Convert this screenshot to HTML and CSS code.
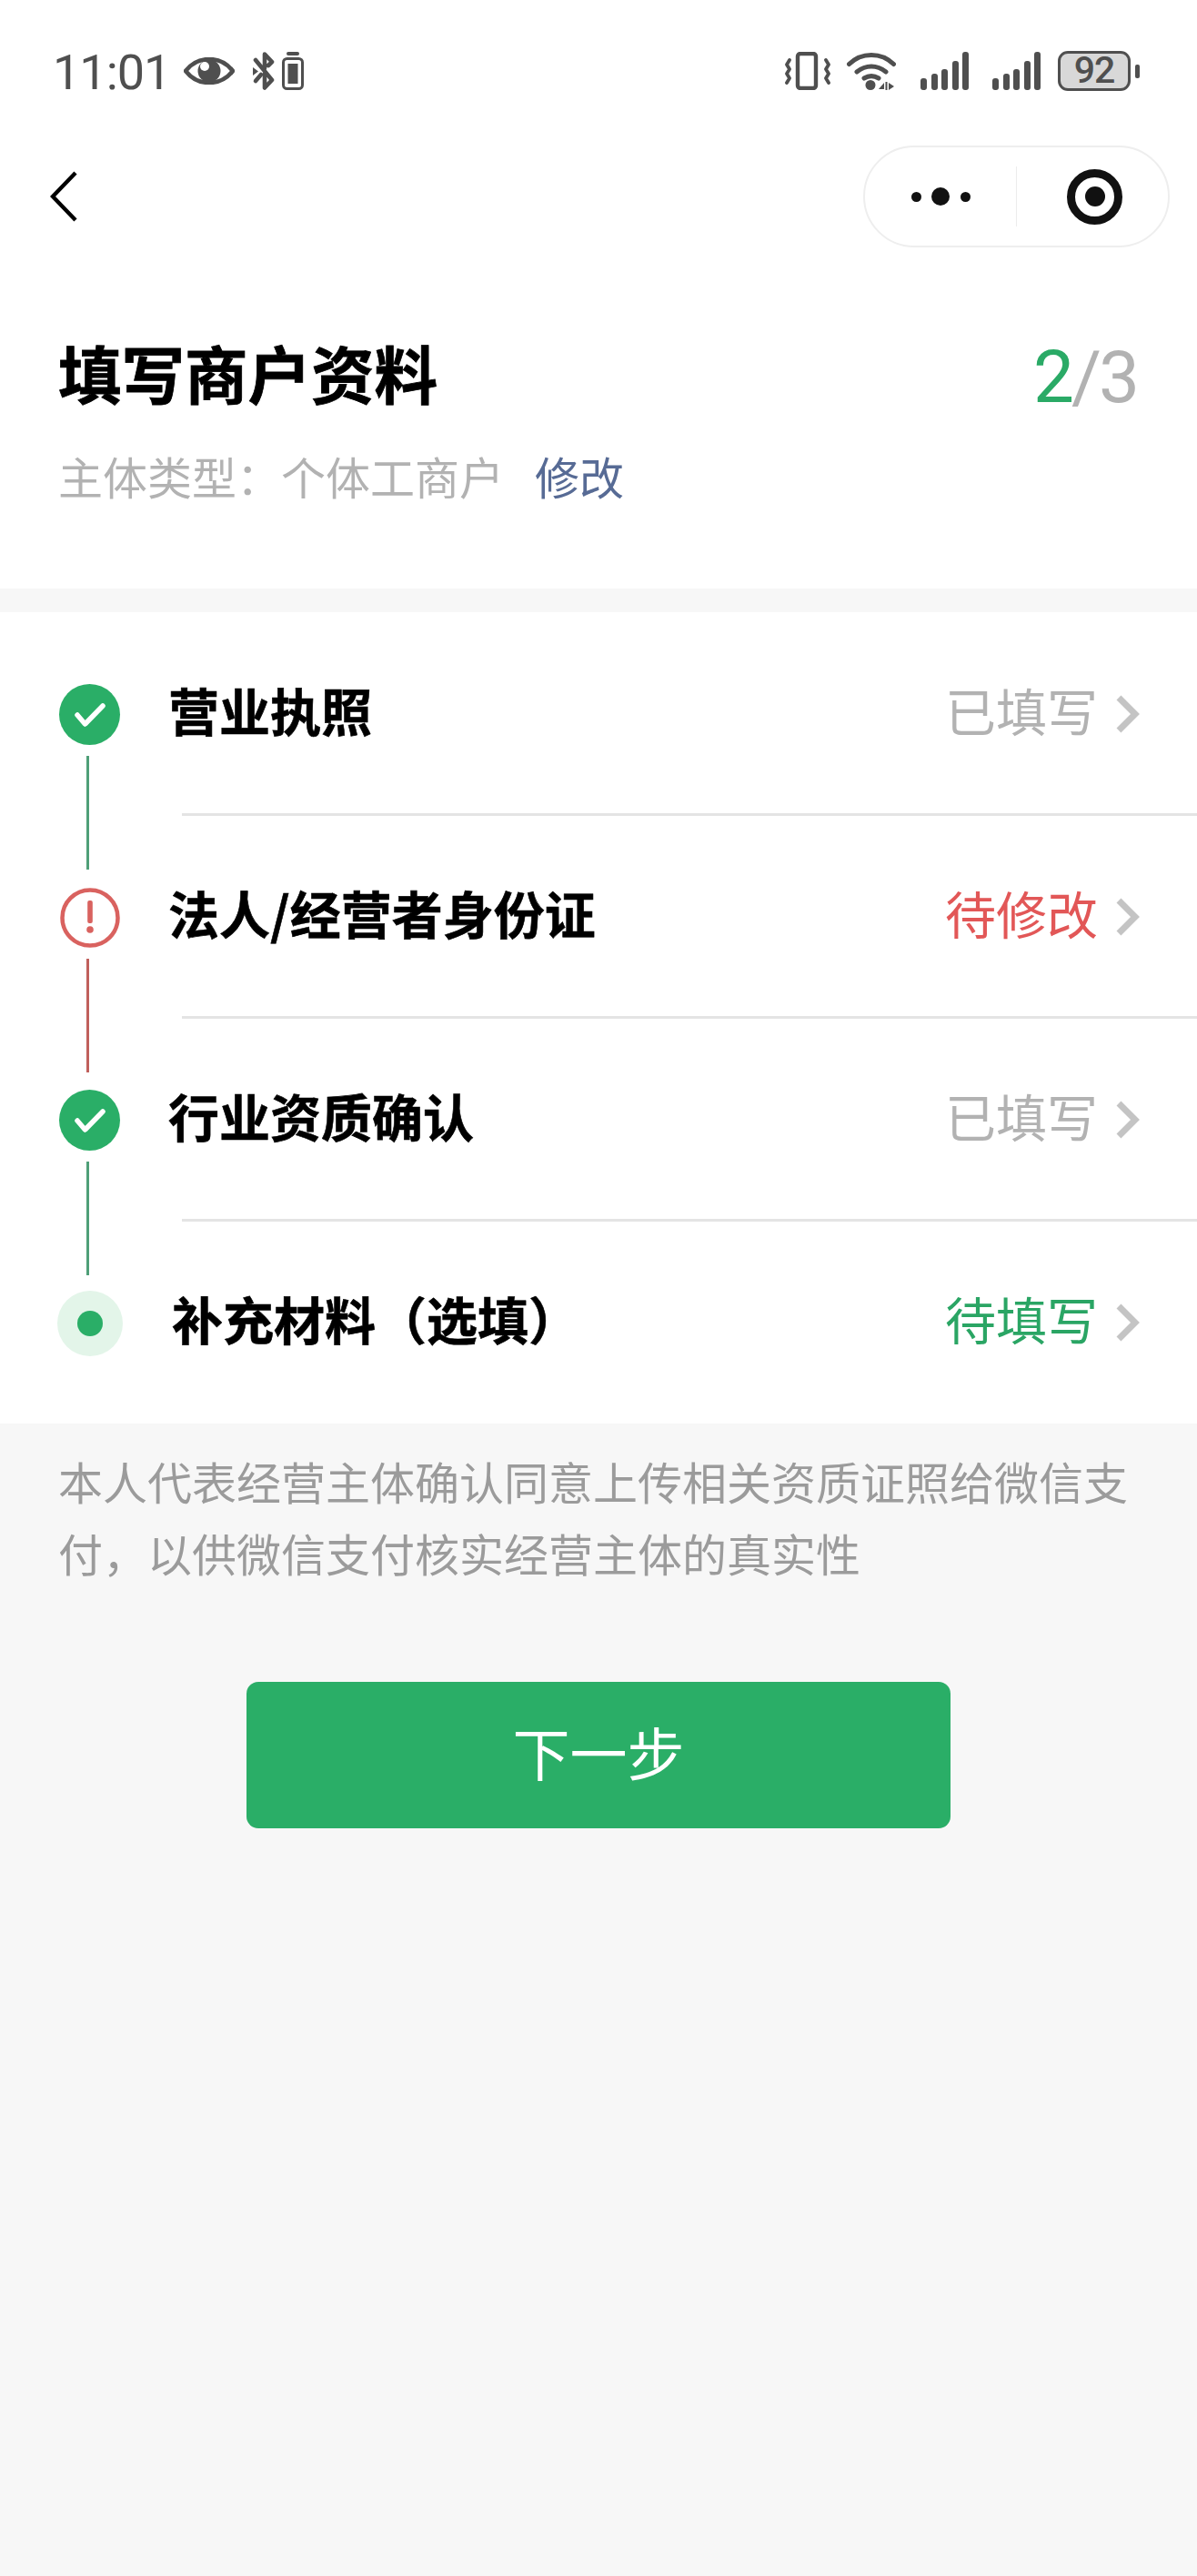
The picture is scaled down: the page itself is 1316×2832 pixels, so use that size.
FILE: index.html
```html
<!DOCTYPE html>
<html lang="zh-CN">
<head>
  <meta charset="UTF-8" />
  <meta name="viewport" content="width=device-width, initial-scale=1" />
  <title>填写商户资料</title>
  <link rel="stylesheet" href="styles.css">
</head>
<body>

  <div class="top">
    <!-- 状态栏 -->
    <div class="status-bar">
      <div class="status-left">
        <span class="time">11:01</span>
        <svg class="ic-eye" width="56" height="30" viewBox="0 0 56 30"><path d="M2 15C9 6 18 2 28 2s19 4 26 13c-7 9-16 13-26 13S9 24 2 15z" fill="none" stroke="#4f4f4f" stroke-width="4.500" stroke-linejoin="round"/><circle cx="28" cy="15" r="12.500" fill="#4f4f4f"/><circle cx="23" cy="10" r="5" fill="#fff"/></svg>
        <svg class="ic-bt" width="27" height="42" viewBox="0 0 27 42"><path d="M4 9l18 22-8 8.500V24M14 18V2.500l8 8.500-4 4" fill="none" stroke="#4f4f4f" stroke-width="4.600" stroke-linecap="round" stroke-linejoin="round"/><path d="M4 32l6-7" fill="none" stroke="#4f4f4f" stroke-width="4.600" stroke-linecap="round"/><path d="M1 17l6 4.500-6 4.500z" fill="#4f4f4f"/></svg>
        <svg class="ic-batt-small" width="24" height="42" viewBox="0 0 24 42"><rect x="5" y="0" width="14" height="4" rx="2" fill="#4f4f4f"/><rect x="1.500" y="7.500" width="21" height="33" rx="4" fill="none" stroke="#4f4f4f" stroke-width="3"/><rect x="6.500" y="13" width="11" height="22" fill="#4f4f4f"/></svg>
      </div>
      <div class="status-right">
        <svg class="ic-vibrate" width="50" height="42" viewBox="0 0 50 42"><rect x="14" y="2" width="20" height="38" rx="3" fill="none" stroke="#4f4f4f" stroke-width="4.400"/><path d="M5 9l-3 5 3 5-3 5 3 5-3 5M45 9l3 5-3 5 3 5-3 5 3 5" fill="none" stroke="#4f4f4f" stroke-width="3.800" stroke-linecap="round" stroke-linejoin="round"/></svg>
        <svg class="ic-wifi" width="54" height="42" viewBox="0 0 54 42"><path d="M2.500 13.500C16 0 38 0 51.500 13.500M11 22c10-8 22-8 32 0M19 29c5-3 11-3 16 0" fill="none" stroke="#4f4f4f" stroke-width="5" stroke-linecap="round"/><circle cx="26" cy="36.500" r="5.500" fill="#4f4f4f"/><path d="M42.500 33v9h2v-9zM41 41h-6l6-7zM46 34l6 4-6 4z" fill="#4f4f4f"/></svg>
        <div class="signal">
          <i class="bar b1"></i><i class="bar b2"></i><i class="bar b3"></i><i class="bar b4"></i><i class="bar b5"></i>
        </div>
        <div class="signal">
          <i class="bar b1"></i><i class="bar b2"></i><i class="bar b3"></i><i class="bar b4"></i><i class="bar b5"></i>
        </div>
        <div class="battery">
          <span class="battery-body">92</span>
          <i class="battery-tip"></i>
        </div>
      </div>
    </div>

    <!-- 导航 -->
    <div class="nav">
      <svg class="back" width="30" height="56" viewBox="0 0 30 56"><path d="M28 2L3 28l25 26" fill="none" stroke="#000" stroke-width="4.400"/></svg>
      <div class="capsule">
        <div class="capsule-more">
          <i class="dot-s"></i><i class="dot-b"></i><i class="dot-s"></i>
        </div>
        <i class="capsule-line"></i>
        <div class="capsule-close"><i></i></div>
      </div>
    </div>

    <div class="head">
      <div class="head-row">
        <h1>填写商户资料</h1>
        <div class="steps"><span class="steps-now">2</span>/3</div>
      </div>
      <p class="sub">主体类型：个体工商户<a class="sub-edit">修改</a></p>
    </div>
  </div>

  <ul class="list">
    <li class="row">
      <div class="node node-done line-green">
        <svg width="34" height="26" viewBox="0 0 34 26"><path d="M3 13l8.500 10L31 3" fill="none" stroke="#fff" stroke-width="5.500" stroke-linecap="round" stroke-linejoin="round"/></svg>
      </div>
      <div class="row-main">
        <span class="row-title">营业执照</span>
        <span class="row-state">已填写</span>
        <svg class="chev" width="26" height="42" viewBox="0 0 26 42"><path d="M3 3l18 18L3 39" fill="none" stroke="#c4c4c4" stroke-width="7"/></svg>
      </div>
    </li>
    <li class="row">
      <div class="node node-warn line-red">
        <svg width="66" height="66" viewBox="0 0 66 66"><circle cx="33" cy="33" r="30.500" fill="none" stroke="#d9625f" stroke-width="4.500"/><rect x="30.200" y="14" width="5.600" height="25" rx="2" fill="#d9625f"/><circle cx="33" cy="46" r="3.800" fill="#d9625f"/></svg>
      </div>
      <div class="row-main">
        <span class="row-title">法人/经营者身份证</span>
        <span class="row-state state-red">待修改</span>
        <svg class="chev" width="26" height="42" viewBox="0 0 26 42"><path d="M3 3l18 18L3 39" fill="none" stroke="#c4c4c4" stroke-width="7"/></svg>
      </div>
    </li>
    <li class="row">
      <div class="node node-done line-green">
        <svg width="34" height="26" viewBox="0 0 34 26"><path d="M3 13l8.500 10L31 3" fill="none" stroke="#fff" stroke-width="5.500" stroke-linecap="round" stroke-linejoin="round"/></svg>
      </div>
      <div class="row-main">
        <span class="row-title">行业资质确认</span>
        <span class="row-state">已填写</span>
        <svg class="chev" width="26" height="42" viewBox="0 0 26 42"><path d="M3 3l18 18L3 39" fill="none" stroke="#c4c4c4" stroke-width="7"/></svg>
      </div>
    </li>
    <li class="row">
      <div class="node node-now"><i></i></div>
      <div class="row-main">
        <span class="row-title">补充材料（选填）</span>
        <span class="row-state state-green">待填写</span>
        <svg class="chev" width="26" height="42" viewBox="0 0 26 42"><path d="M3 3l18 18L3 39" fill="none" stroke="#c4c4c4" stroke-width="7"/></svg>
      </div>
    </li>
  </ul>

  <p class="notice">本人代表经营主体确认同意上传相关资质证照给微信支付，以供微信支付核实经营主体的真实性</p>

  <button class="next">下一步</button>

</body>
</html>
```

FILE: styles.css
```css
* {
  box-sizing: border-box;
}
body {
  margin: 0;
  min-height: 2832px;
  background: #f7f7f7;
  font-family: "Noto Sans CJK SC", "Liberation Sans", sans-serif;
  color: #000;
}
.top {
  background: #fff;
  height: 647px;
  padding-top: 56px;
}

/* 状态栏 */
.status-bar {
  height: 44px;
  padding: 0 63px 0 58px;
  display: flex;
  justify-content: space-between;
  align-items: center;
}
.status-left {
  display: flex;
  align-items: center;
}
.time {
  font-family: Roboto, sans-serif;
  font-size: 54px;
  line-height: 44px;
  letter-spacing: -1px;
  color: #4f4f4f;
  width: 144px;
  margin-top: 3px;
}
.ic-bt {
  margin-left: 19px;
}
.ic-batt-small {
  margin-left: 6px;
}
.status-right {
  display: flex;
  align-items: center;
}
.ic-wifi {
  margin-left: 18px;
}
.signal {
  width: 53px;
  height: 42px;
  margin-left: 26px;
  display: flex;
  align-items: flex-end;
  justify-content: space-between;
}
.ic-wifi + .signal {
  margin-left: 27px;
}
.bar {
  width: 7px;
  background: #4f4f4f;
  border-radius: 3px;
}
.b1 { height: 13px; }
.b2 { height: 18px; }
.b3 { height: 23px; }
.b4 { height: 32px; }
.b5 { height: 42px; }
.battery {
  margin-left: 19px;
  display: flex;
  align-items: center;
}
.battery-body {
  width: 80px;
  height: 44px;
  border: 3.5px solid #4f4f4f;
  border-radius: 11px;
  background: #d8d8d8;
  color: #4f4f4f;
  font-family: Roboto, sans-serif;
  font-size: 41px;
  font-weight: 500;
  line-height: 37px;
  letter-spacing: -1px;
  text-align: center;
}
.battery-tip {
  width: 5px;
  height: 15px;
  margin-left: 5px;
  background: #4f4f4f;
  border-radius: 2px;
}

/* 导航 */
.nav {
  margin-top: 60px;
  height: 112px;
  padding: 0 30px 0 55px;
  display: flex;
  justify-content: space-between;
  align-items: center;
}
.capsule {
  width: 337px;
  height: 112px;
  border: 2px solid #eeeeee;
  border-radius: 56px;
  display: flex;
  align-items: center;
}
.capsule-more {
  width: 166px;
  display: flex;
  justify-content: center;
  align-items: center;
  gap: 11.5px;
}
.dot-s {
  width: 11px;
  height: 11px;
  border-radius: 50%;
  background: #111;
}
.dot-b {
  width: 20px;
  height: 20px;
  border-radius: 50%;
  background: #111;
}
.capsule-line {
  width: 1px;
  height: 66px;
  background: #ececec;
}
.capsule-close {
  width: 61px;
  height: 61px;
  margin-left: 55px;
  border: 9px solid #111;
  border-radius: 50%;
  display: flex;
  justify-content: center;
  align-items: center;
}
.capsule-close i {
  width: 22px;
  height: 22px;
  border-radius: 50%;
  background: #111;
}

/* 标题 */
.head {
  margin-top: 95px;
  padding: 0 66px 0 64px;
}
.head-row {
  display: flex;
  justify-content: space-between;
  align-items: center;
  height: 84px;
}
h1 {
  margin: 0;
  font-size: 69.5px;
  line-height: 84px;
  font-weight: 700;
  -webkit-text-stroke: 0.8px #000;
}
.steps {
  margin-top: 12px;
  font-family: Roboto, sans-serif;
  font-size: 80px;
  line-height: 84px;
  letter-spacing: -3px;
  color: #b2b2b2;
}
.steps-now {
  color: #2aaa66;
}
.sub {
  margin: 42px 0 0;
  font-size: 49px;
  line-height: 60px;
  color: #b2b2b2;
}
.sub-edit {
  margin-left: 34px;
  color: #576b95;
}

/* 列表 */
.list {
  list-style: none;
  margin: 26px 0 0;
  padding: 0;
  background: #fff;
}
.row {
  height: 223px;
  display: flex;
  align-items: center;
}
.node {
  position: relative;
  width: 67px;
  height: 67px;
  margin: 2px 54px 0 65px;
  flex: none;
  border-radius: 50%;
  display: flex;
  justify-content: center;
  align-items: center;
}
.node-done {
  background: #2aae67;
}
.node-now {
  width: 72px;
  height: 72px;
  margin: 2px 55px 0 63px;
  background: #e3f5e9;
}
.node-now i {
  width: 28px;
  height: 28px;
  border-radius: 50%;
  background: #2aae67;
}
.line-green::after,
.line-red::after {
  content: "";
  position: absolute;
  left: 30px;
  top: 79px;
  width: 3px;
  height: 125px;
}
.line-green::after {
  background: #4f9f78;
}
.line-red::after {
  background: #c0605c;
}
.row-main {
  flex: 1;
  align-self: stretch;
  display: flex;
  align-items: center;
  margin-left: 14px;
  padding-right: 63px;
  position: relative;
}
.row:not(:last-child) .row-main::after {
  content: "";
  position: absolute;
  left: 0;
  right: 0;
  bottom: -1px;
  height: 3px;
  background: #e4e4e4;
}
.row-title {
  flex: 1;
  margin-left: -15px;
  font-size: 56px;
  font-weight: 700;
  line-height: 70px;
  position: relative;
  top: -5px;
  -webkit-text-stroke: 0.6px #000;
}
.row-state {
  font-size: 56px;
  line-height: 70px;
  color: #b2b2b2;
  position: relative;
  top: -5px;
}
.state-red {
  color: #e25757;
}
.state-green {
  color: #2aa564;
}
.chev {
  margin-left: 20px;
}

/* 底部 */
.notice {
  margin: 23px 0 0;
  padding: 0 64px;
  font-size: 49px;
  line-height: 79px;
  color: #9b9b9b;
}
.next {
  display: block;
  width: 774px;
  height: 161px;
  margin: 103px 0 0 271px;
  padding: 0 0 10px;
  border: none;
  border-radius: 13px;
  background: #2aae67;
  color: #fff;
  font-family: inherit;
  font-size: 63px;
}
```
